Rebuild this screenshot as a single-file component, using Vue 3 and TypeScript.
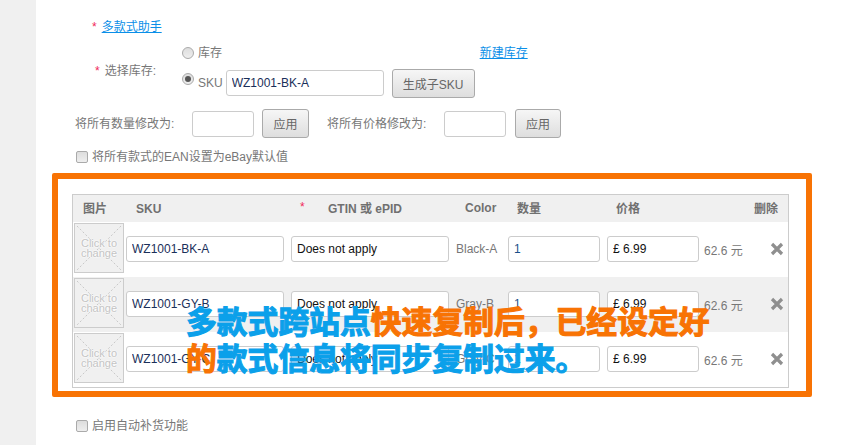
<script setup lang="ts">
interface Row { sku: string; color: string; alt: boolean }
const rows: Row[] = [
  { sku: 'WZ1001-BK-A', color: 'Black-A', alt: false },
  { sku: 'WZ1001-GY-B', color: 'Gray-B', alt: true },
  { sku: 'WZ1001-GY-C', color: 'Gray-C', alt: false },
]
</script>

<template>
  <div class="page">
    <aside class="side"></aside>
    <main class="main">
      <div class="helper"><span class="star">*</span><a class="link">多款式助手</a></div>
      <div class="stock">
        <div class="stock-label"><span class="star">*</span>选择库存:</div>
        <div class="stock-opts">
          <div class="opt-plain"><span class="radio"></span><span>库存</span></div>
          <div class="opt-sku">
            <span class="radio on"></span><span>SKU</span>
            <input class="input w158" value="WZ1001-BK-A" />
            <button class="btn b83">生成子SKU</button>
          </div>
        </div>
        <a class="link new-link">新建库存</a>
      </div>
      <div class="bulk">
        <span class="bulk-label">将所有数量修改为:</span>
        <input class="input w62" />
        <button class="btn b47">应用</button>
        <span class="bulk-label second">将所有价格修改为:</span>
        <input class="input w62" />
        <button class="btn b47 third">应用</button>
      </div>
      <label class="check first"><span class="box"></span>将所有款式的EAN设置为eBay默认值</label>

      <section class="frame">
        <div class="table">
          <div class="head">
            <span class="h-img">图片</span>
            <span class="h-sku">SKU</span>
            <span class="h-gtin"><i class="star">*</i>GTIN 或 ePID</span>
            <span class="h-color">Color</span>
            <span class="h-qty">数量</span>
            <span class="h-price">价格</span>
            <span class="h-del">删除</span>
          </div>
          <div v-for="r in rows" :key="r.sku" class="grid row" :class="{ alt: r.alt }">
            <div class="thumb">
              <svg class="thumb-x" viewBox="0 0 48 48" width="48" height="48">
                <path d="M2 2 L46 46 M46 2 L2 46" stroke="#c8c8c8" stroke-width="1" stroke-dasharray="2 2" fill="none" />
              </svg>
              <span class="thumb-t">Click to change</span>
            </div>
            <input class="input cell" :value="r.sku" />
            <input class="input cell black" value="Does not apply" />
            <span class="color">{{ r.color }}</span>
            <input class="input cell blue" value="1" />
            <input class="input cell black" value="£ 6.99" />
            <span class="rmb">62.6 元</span>
            <svg class="del" viewBox="0 0 14 14" width="14" height="14">
              <path d="M2 2 L12 12 M12 2 L2 12" stroke="#8f8f8f" stroke-width="3.2" fill="none" />
            </svg>
          </div>
        </div>
        <div class="caption">
          <div><span class="c-blue">多款式跨站点</span><span class="c-orange">快速复制后，已经设定好</span></div>
          <div class="l2"><span class="c-orange">的</span><span class="c-blue">款式信息将同步复制过来。</span></div>
        </div>
      </section>

      <label class="check last"><span class="box"></span>启用自动补货功能</label>
    </main>
  </div>
</template>

<style>
html, body { margin: 0; background: #fff; overflow: hidden; }
</style>

<style scoped>
.page {
  display: flex;
  width: 847px;
  height: 445px;
  overflow: hidden;
  font: 12px/16px "Liberation Sans", "Noto Sans CJK SC", sans-serif;
  color: #777;
}
.side { width: 36px; flex: none; background: #f0f0f0; }
.main { flex: 1; min-width: 0; display: flex; flex-direction: column; }
.star { color: #f0285a; font-style: normal; }
.link { color: #0a8fe8; text-decoration: underline; }
.helper { margin: 19px 0 0 56px; display: flex; gap: 5px; height: 16px; }
.stock { display: flex; margin-top: 10px; height: 55px; position: relative; }
.stock-label { margin: 18px 0 0 59px; width: 87px; flex: none; display: flex; gap: 5px; }
.stock-opts { display: flex; flex-direction: column; }
.opt-plain { display: flex; align-items: center; gap: 4px; height: 16px; }
.opt-sku { display: flex; align-items: center; gap: 4px; margin-top: 6px; height: 32px; }
.radio {
  width: 12px; height: 12px; border-radius: 50%; box-sizing: border-box;
  border: 1px solid #aaa; background: linear-gradient(#ddd, #eee); flex: none; position: relative;
}
.radio.on { margin-top: -8px; }
.radio.on::after {
  content: ""; position: absolute; left: 2px; top: 2px; width: 6px; height: 6px; border-radius: 50%; background: #555;
}
.new-link { margin: 0 0 0 5px; height: 16px; }
.input {
  box-sizing: border-box; height: 26px; border: 1px solid #ccc; border-radius: 3px; background: #fff;
  padding: 0 5px; font: 12px "Liberation Sans", "Noto Sans CJK SC", sans-serif; color: #1a2f5a; outline: none;
}
.w158 { width: 158px; margin-left: -1px; }
.w62 { width: 62px; }
.btn {
  box-sizing: border-box; height: 29px; border: 1px solid #aaa; border-radius: 3px; padding: 0;
  background: linear-gradient(#f6f6f6, #dedede); color: #666;
  font: 12px "Liberation Sans", "Noto Sans CJK SC", sans-serif;
}
.b83 { width: 83px; margin-left: 4px; }
.b47 { width: 47px; margin-left: 8px; }
.third { width: 46px; margin-left: 9px; }
.bulk { display: flex; align-items: center; margin: 9px 0 0 39px; height: 29px; }
.bulk-label { width: 102px; flex: none; margin-right: 15px; }
.bulk-label.second { margin-left: 18px; }
.check { display: flex; align-items: center; gap: 4px; margin-left: 40px; height: 16px; }
.check.first { margin-top: 11px; }
.check.last { margin-top: 21px; }
.box {
  width: 12px; height: 12px; box-sizing: border-box; border: 1px solid #aaa; border-radius: 2px;
  background: linear-gradient(#ddd, #eee); flex: none;
}
.frame {
  position: relative; box-sizing: border-box; width: 760px; height: 224px; margin: 8px 0 0 16px;
  border: 6px solid #f87304; border-radius: 2px; padding: 15px 17px 0 14px; background: #fff;
}
.table { box-sizing: border-box; width: 717px; height: 194px; border: 1px solid #ccc; }
.grid {
  display: grid;
  grid-template-columns: 45px 158px 158px 45px 92px 92px 57px 14px;
  column-gap: 7px;
  padding: 0 0 0 1px;
}
.head {
  height: 27px; background: #f0f0f0; font-weight: bold; color: #707070;
  display: flex;
  align-items: center;
}
.head span { flex: none; }
.h-img { margin-left: 10px; width: 53px; }
.h-sku { width: 164px; }
.h-gtin { width: 165px; position: relative; padding-left: 28px; box-sizing: border-box; }
.h-gtin .star { position: absolute; left: 0; top: -2px; font-weight: normal; }
.h-color { width: 52px; margin-top: -2px; }
.h-qty { width: 99px; }
.h-price { width: 138px; }
.row { height: 55px; align-items: start; }
.row.alt { background: #f0f0f0; }
.thumb {
  position: relative; box-sizing: border-box; width: 50px; height: 50px; margin-top: 1px;
  border: 1px solid #ccc; background: #f0f0f0; display: flex; align-items: center; justify-content: center;
}
.thumb-x { position: absolute; left: 0; top: 0; }
.thumb-t {
  position: relative; width: 44px; text-align: center; font-size: 11px; line-height: 10px;
  color: #c4c4c4; text-shadow: 0 0 2px #fff, 0 0 2px #fff, 0 0 2px #fff;
}
.cell { margin-top: 14px; width: 100%; }
.black { color: #111; }
.blue { color: #1a4f8a; }
.color { margin-top: 19px; }
.rmb { margin: 21px 0 0 -2px; white-space: nowrap; }
.del { margin: 20px 0 0 0; }
.caption {
  position: absolute; left: 128px; top: 122px; white-space: nowrap;
  font: 700 30.8px/37px "Noto Sans CJK SC", sans-serif;
  -webkit-text-stroke: 1.1px currentColor;
  pointer-events: none;
}
.c-blue { color: #0ba0ea; }
.c-orange { color: #f87304; }
</style>
